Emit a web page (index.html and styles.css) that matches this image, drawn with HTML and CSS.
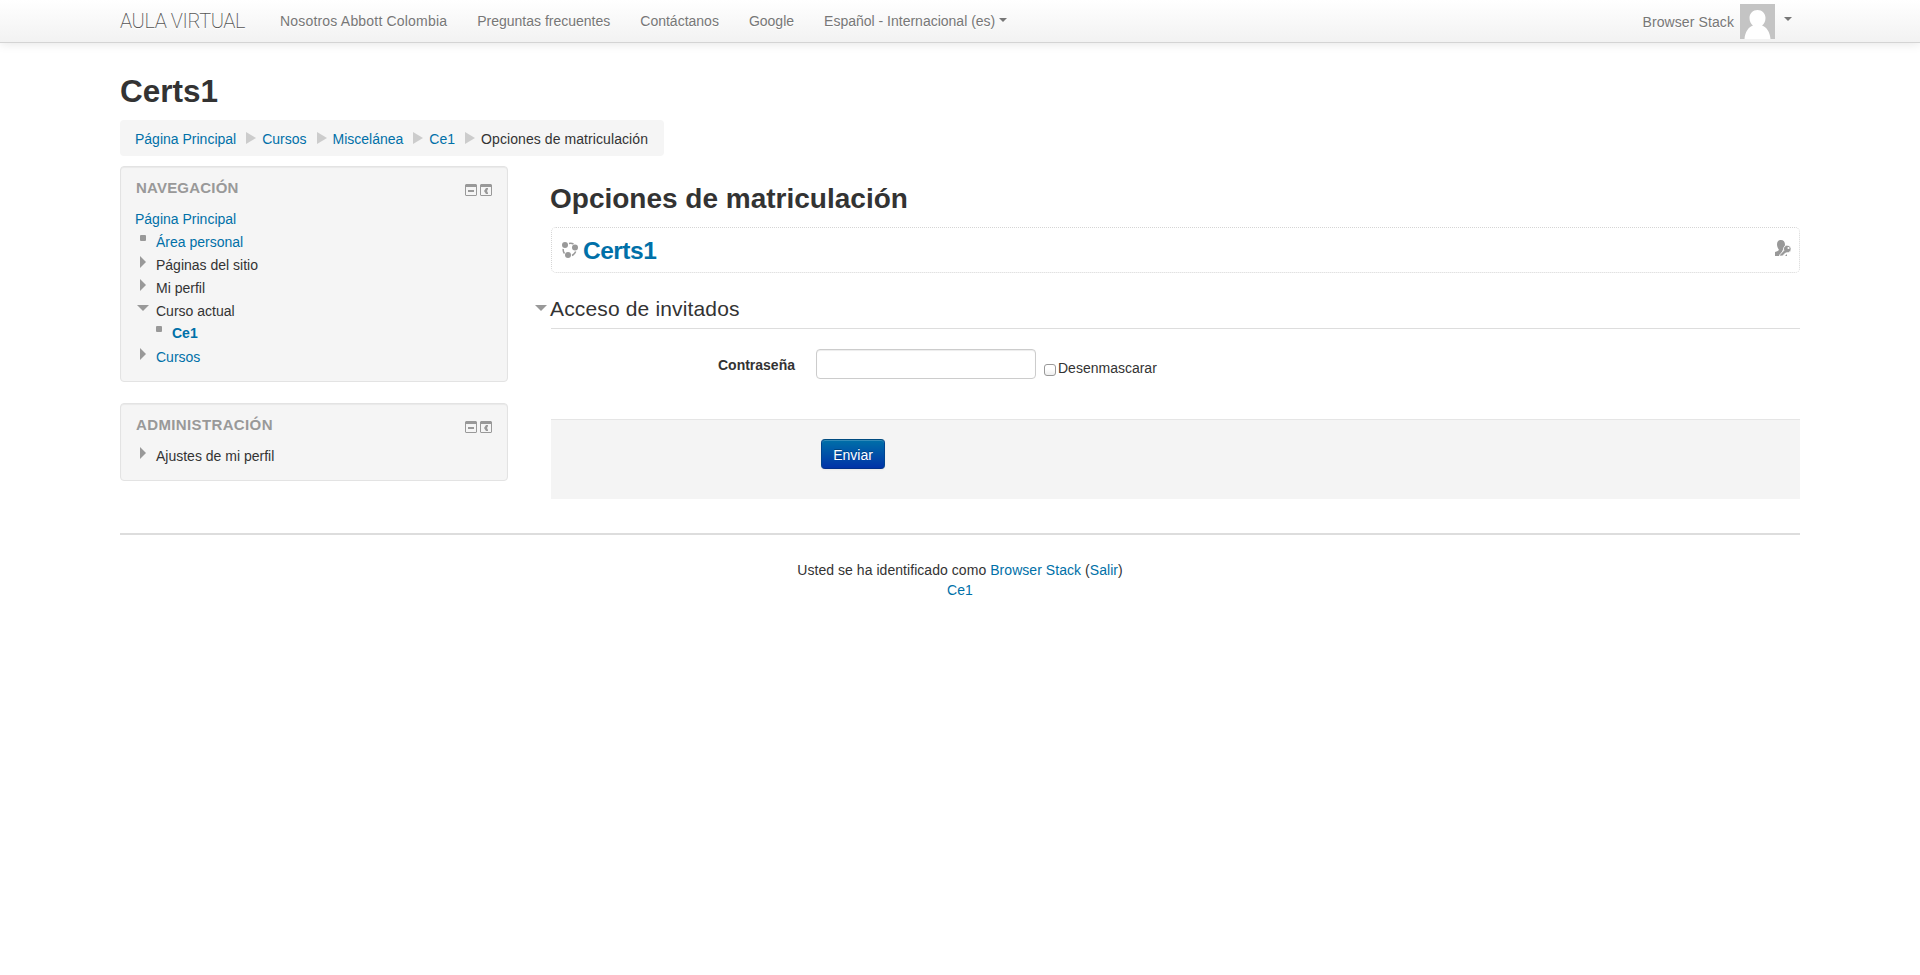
FILE: index.html
```
<!DOCTYPE html>
<html lang="es">
<head>
<meta charset="utf-8">
<title>Opciones de matriculación</title>
<link rel="stylesheet" href="styles.css">
</head>
<body>
<header class="navbar">
  <div class="container navbar-inner">
    <a class="brand">AULA VIRTUAL</a>
    <nav class="menu">
      <a class="menu-first">Nosotros Abbott Colombia</a>
      <a>Preguntas frecuentes</a>
      <a>Contáctanos</a>
      <a>Google</a>
      <a>Español - Internacional (es)<span class="caret"></span></a>
    </nav>
    <div class="user">
      <span class="user-name">Browser Stack</span>
      <svg class="avatar" width="35" height="35" viewBox="0 0 35 35"><rect width="35" height="35" fill="#c4c4c4"/><path d="M4.500 35C5 28 8.500 23 13 21.500C11 20 9.500 17.500 9.500 14C9.500 9.500 13 6 17.500 6S25.500 9.500 25.500 14C25.500 17.500 24 20 22 21.500C26.500 23 30 28 30.500 35Z" fill="#fff"/></svg>
      <span class="caret"></span>
    </div>
  </div>
</header>
<div class="container page">
  <h1>Certs1</h1>
  <nav class="breadcrumb">
    <a class="link">Página Principal</a><i class="sep"></i>
    <a class="link">Cursos</a><i class="sep"></i>
    <a class="link">Miscelánea</a><i class="sep"></i>
    <a class="link">Ce1</a><i class="sep"></i>
    <span class="current">Opciones de matriculación</span>
  </nav>
  <div class="columns">
    <aside class="side">
      <section class="block nav-block">
        <div class="block-head"><h2>Navegación</h2>
          <span class="tools">
            <svg width="12" height="12" viewBox="0 0 12 12"><path d="M1 0H11L12 1V11L11 12H1L0 11V1ZM1 3V11H11V3ZM3 6H9V8H3Z" fill="#999" fill-rule="evenodd"/></svg>
            <svg width="12" height="12" viewBox="0 0 12 12"><path d="M1 0H11L12 1V11L11 12H1L0 11V1ZM1 3V11H11V3ZM6 4H8V5L7 7L8 9V10H6L4 7Z" fill="#999" fill-rule="evenodd"/></svg>
          </span>
        </div>
        <div class="tree">
          <div class="row root"><a class="link">Página Principal</a></div>
          <div class="row"><i class="mark square"></i><a class="link">Área personal</a></div>
          <div class="row"><i class="mark right"></i><span>Páginas del sitio</span></div>
          <div class="row"><i class="mark right"></i><span>Mi perfil</span></div>
          <div class="row"><i class="mark down"></i><span>Curso actual</span></div>
          <div class="row sub"><i class="mark square"></i><a class="link">Ce1</a></div>
          <div class="row"><i class="mark right"></i><a class="link">Cursos</a></div>
        </div>
      </section>
      <section class="block admin-block">
        <div class="block-head"><h2>Administración</h2>
          <span class="tools">
            <svg width="12" height="12" viewBox="0 0 12 12"><path d="M1 0H11L12 1V11L11 12H1L0 11V1ZM1 3V11H11V3ZM3 6H9V8H3Z" fill="#999" fill-rule="evenodd"/></svg>
            <svg width="12" height="12" viewBox="0 0 12 12"><path d="M1 0H11L12 1V11L11 12H1L0 11V1ZM1 3V11H11V3ZM6 4H8V5L7 7L8 9V10H6L4 7Z" fill="#999" fill-rule="evenodd"/></svg>
          </span>
        </div>
        <div class="tree">
          <div class="row"><i class="mark right"></i><span>Ajustes de mi perfil</span></div>
        </div>
      </section>
    </aside>
    <main class="main">
      <h2 class="title">Opciones de matriculación</h2>
      <div class="course">
        <svg class="course-icon" width="16" height="16" viewBox="0 0 16 16" fill="#999"><circle cx="3" cy="3" r="3"/><circle cx="13" cy="5.500" r="3"/><circle cx="6" cy="13" r="3"/><path d="M7 1.500Q9.500 1 11.500 2M1.300 7Q.8 9.500 2.500 11.500M13.700 9.500Q12.500 12.500 10 13.500" fill="none" stroke="#999" stroke-width="1.500"/></svg>
        <a class="link course-name">Certs1</a>
        <svg class="enrol-icon" width="16" height="16" viewBox="0 0 16 16" fill="#999"><path d="M6 0C8.500 0 10 1.800 10 4.500C10 6.500 8.500 8 8 9.500L5 16H0V12Q2.500 11.500 4 10C3 8.500 2 6.500 2 4.500C2 1.800 3.500 0 6 0Z"/><path d="M8.800 10.500A3.800 3.800 0 1 1 12 12.800L10.500 13L7.500 16H4.500V15Z" stroke="#fff" stroke-width=".8"/><circle cx="13.500" cy="8" r="1.100" fill="#fff"/><path d="M10 16L12 14V16Z"/></svg>
      </div>
      <h3 class="legend"><i class="mark down"></i>Acceso de invitados</h3>
      <div class="field">
        <label class="field-label">Contraseña</label>
        <input class="password" type="password">
        <label class="unmask"><span class="box"></span>Desenmascarar</label>
      </div>
      <div class="actions"><button class="submit">Enviar</button></div>
    </main>
  </div>
  <footer class="footer">
    <div>Usted se ha identificado como <a class="link">Browser Stack</a> (<a class="link">Salir</a>)</div>
    <div><a class="link">Ce1</a></div>
  </footer>
</div>
</body>
</html>
```
FILE: styles.css
```
* { box-sizing: border-box; }
body { margin: 0; background: #fff; color: #333; font: 14px/20px "Liberation Sans", Arial, sans-serif; white-space: nowrap; }
h1, h2, h3 { margin: 0; }
.container { width: 1680px; margin: 0 auto; }
.link { color: #0070a8; }
.navbar { height: 43px; border-bottom: 1px solid #d4d4d4; background: linear-gradient(#fff, #f2f2f2); box-shadow: 0 1px 10px rgba(0, 0, 0, .1); color: #777; text-shadow: 0 1px 0 #fff; }
.navbar-inner { display: flex; height: 42px; align-items: center; }
.brand { width: 160px; font: 200 20px/20px Roboto, sans-serif; letter-spacing: -.4px; color: #555; }
.menu { display: flex; gap: 30px; }
.menu-first { letter-spacing: .19px; }
.caret { display: inline-block; border: 4px solid transparent; border-top-color: #777; border-bottom: 0; vertical-align: 4px; margin-left: 4px; }
.user { display: flex; margin-left: auto; align-items: center; padding-right: 8px; }
.user-name { padding-top: 2px; margin-right: 6px; letter-spacing: .1px; }
.user .caret { margin: 0 0 4px 9px; }
h1 { padding-top: 28px; height: 77px; font-size: 31.5px; line-height: 40px; }
.breadcrumb { display: flex; align-items: center; width: 544px; height: 36px; padding: 2px 15px 0; background: #f5f5f5; border-radius: 4px; }
.sep { border: 6px solid transparent; border-left: 10px solid #ccc; border-right: 0; margin: 0 6px 2px 10px; }
.current { letter-spacing: .08px; }
.columns { display: flex; gap: 43px; margin-top: 10px; }
.side { width: 388px; }
.block { border: 1px solid #e3e3e3; border-radius: 4px; background: #f5f5f5; box-shadow: inset 0 1px 1px rgba(0, 0, 0, .05); padding: 11px 15px 0 14px; }
.nav-block { height: 216px; margin-bottom: 21px; }
.admin-block { height: 78px; }
.block-head { display: flex; justify-content: space-between; height: 29px; padding-left: 1px; }
.block h2 { font-size: 15px; line-height: 20px; letter-spacing: .2px; color: #999; text-transform: uppercase; }
.admin-block h2 { letter-spacing: .37px; }
.tools { display: flex; gap: 3px; padding-top: 6px; }
.row { display: flex; height: 23px; padding-top: 2px; }
.mark { background: #999; flex: none; }
.square { width: 6px; height: 6px; margin: 3px 10px 0 5px; border-radius: 1px; }
.right { width: 6px; height: 12px; margin: 1px 10px 0 5px; clip-path: polygon(0 0, 100% 50%, 0 100%); }
.down { width: 12px; height: 6px; margin: 4px 7px 0 2px; clip-path: polygon(0 0, 100% 0, 50% 100%); }
.sub { padding: 1px 0 0 16px; font-weight: bold; }
.main { width: 1249px; padding-top: 12px; }
.title { font-size: 28px; line-height: 42px; height: 49px; margin-left: -1px; }
.course { display: flex; align-items: center; height: 46px; border: 1px dotted #d5d5d5; border-radius: 5px; padding: 0 8px 0 10px; }
.course-name { font-size: 24.5px; font-weight: bold; margin-left: 5px; padding-top: 2px; letter-spacing: -.5px; }
.enrol-icon { margin: 0 0 4px auto; }
.legend { position: relative; height: 56px; padding-top: 16px; border-bottom: 1px solid #ddd; font-size: 21px; line-height: 40px; font-weight: normal; letter-spacing: .15px; text-indent: -1px; }
.legend .mark { position: absolute; left: -16px; top: 32px; margin: 0; }
.field { display: flex; height: 90px; padding-top: 20px; }
.field-label { width: 244px; margin-right: 21px; padding-top: 6px; text-align: right; font-weight: bold; }
.password { width: 220px; height: 30px; border: 1px solid #ccc; border-radius: 4px; box-shadow: inset 0 1px 1px rgba(0, 0, 0, .075); background: #fff; }
.unmask { display: flex; padding-top: 9px; margin-left: 8px; }
.box { width: 12px; height: 12px; margin: 6px 2px 0 0; border: 1px solid #999; border-radius: 3px; background: linear-gradient(#fff 40%, #eee); }
.actions { height: 80px; padding: 19px 0 0 270px; background: #f4f4f4; border-top: 1px solid #e5e5e5; }
.submit { width: 64px; height: 30px; padding: 2px 0 0; border: 1px solid; border-color: #004b80 #00448f #00308a; border-radius: 4px; background: linear-gradient(#0070a8, #0033a8); box-shadow: inset 0 1px 0 rgba(255, 255, 255, .2), 0 1px 2px rgba(0, 0, 0, .05); color: #fff; font: 14px/20px "Liberation Sans", Arial, sans-serif; text-shadow: 0 -1px 0 rgba(0, 0, 0, .25); }
.footer { margin-top: 34px; padding-top: 25px; border-top: 2px solid #ddd; text-align: center; letter-spacing: .05px; }
```
